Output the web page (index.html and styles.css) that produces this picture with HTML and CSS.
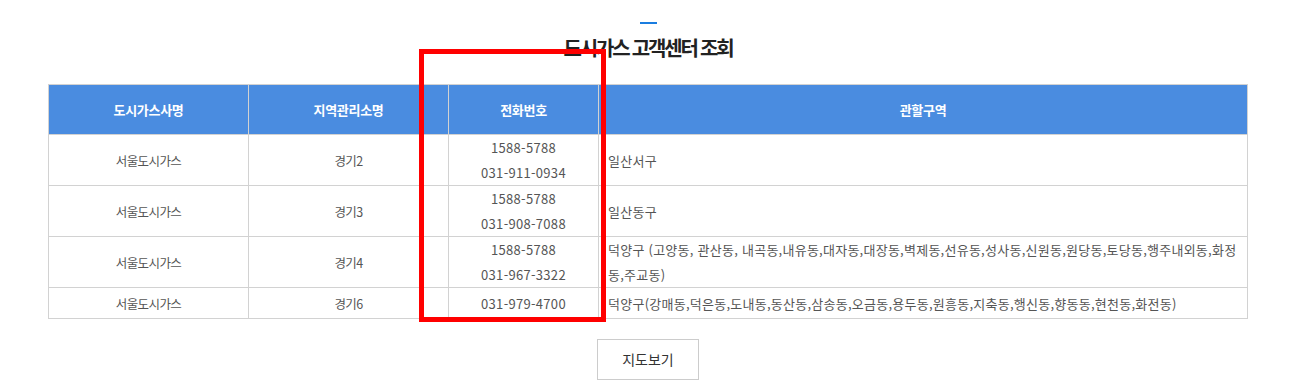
FILE: index.html
```html
<!DOCTYPE html>
<html lang="ko">
<head>
<meta charset="utf-8">
<title>도시가스 고객센터 조회</title>
<link rel="stylesheet" href="styles.css">
</head>
<body>
<div class="wrap">
  <div class="bar"></div>
  <h2 class="title">도시가스 고객센터 조회</h2>
  <table class="tbl">
    <colgroup>
      <col class="c1"><col class="c2"><col class="c3"><col class="c4">
    </colgroup>
    <thead>
      <tr><th>도시가스사명</th><th>지역관리소명</th><th>전화번호</th><th>관할구역</th></tr>
    </thead>
    <tbody>
      <tr><td class="ctr">서울도시가스</td><td class="ctr">경기2</td><td class="ctr num">1588-5788<br>031-911-0934</td><td class="area">일산서구</td></tr>
      <tr><td class="ctr">서울도시가스</td><td class="ctr">경기3</td><td class="ctr num">1588-5788<br>031-908-7088</td><td class="area">일산동구</td></tr>
      <tr><td class="ctr">서울도시가스</td><td class="ctr">경기4</td><td class="ctr num">1588-5788<br>031-967-3322</td><td class="area">덕양구 (고양동, 관산동, 내곡동,내유동,대자동,대장동,벽제동,선유동,성사동,신원동,원당동,토당동,행주내외동,화정동,주교동)</td></tr>
      <tr class="short"><td class="ctr">서울도시가스</td><td class="ctr">경기6</td><td class="ctr num">031-979-4700</td><td class="area">덕양구(강매동,덕은동,도내동,동산동,삼송동,오금동,용두동,원흥동,지축동,행신동,향동동,현천동,화전동)</td></tr>
    </tbody>
  </table>
  <div class="btns"><a class="btn" href="#">지도보기</a></div>
</div>
<div class="mark"></div>
</body>
</html>
```

FILE: styles.css
```css
* { box-sizing: border-box; }
body {
  margin: 0;
  background: #fff;
  font-family: "Noto Sans CJK KR", "Noto Sans", sans-serif;
  color: #555;
}
.wrap {
  width: 1200px;
  margin-left: 48px;
  padding-top: 22px;
}
.bar {
  width: 17px;
  height: 2px;
  background: #1a7de0;
  margin: 0 auto;
}
.title {
  margin: 9px 0 0;
  text-align: center;
  font-size: 20px;
  line-height: 30px;
  font-weight: 700;
  color: #222;
  letter-spacing: -2.2px;
}
.tbl {
  margin-top: 21px;
  width: 1199px;
  border-collapse: collapse;
  table-layout: fixed;
  font-size: 13px;
}
.c1 { width: 200px; }
.c2 { width: 200px; }
.c3 { width: 150px; }
.c4 { width: 649px; }
.tbl th, .tbl td {
  border: 1px solid #d2d2d2;
  padding: 0 9px;
  line-height: 25px;
  vertical-align: middle;
}
.tbl th {
  height: 50px;
  background: #4a8ce0;
  color: #fff;
  font-weight: 700;
  text-align: center;
  letter-spacing: -0.3px;
}
.tbl td { height: 30px; }
.tbl .short td { height: 31px; }
.ctr { text-align: center; letter-spacing: -0.6px; font-size: 12.5px; }
.num { letter-spacing: 0.3px; font-size: 13px; }
.area { text-align: left; letter-spacing: 0.25px; }
.btns {
  display: flex;
  justify-content: center;
  margin-top: 20px;
}
.btn {
  display: block;
  width: 102px;
  height: 41px;
  border: 1px solid #ccc;
  text-align: center;
  line-height: 39px;
  font-size: 14px;
  color: #333;
  text-decoration: none;
}
.mark {
  position: absolute;
  left: 419px;
  top: 49px;
  width: 187px;
  height: 273px;
  border: 5px solid #ff0000;
}
```
